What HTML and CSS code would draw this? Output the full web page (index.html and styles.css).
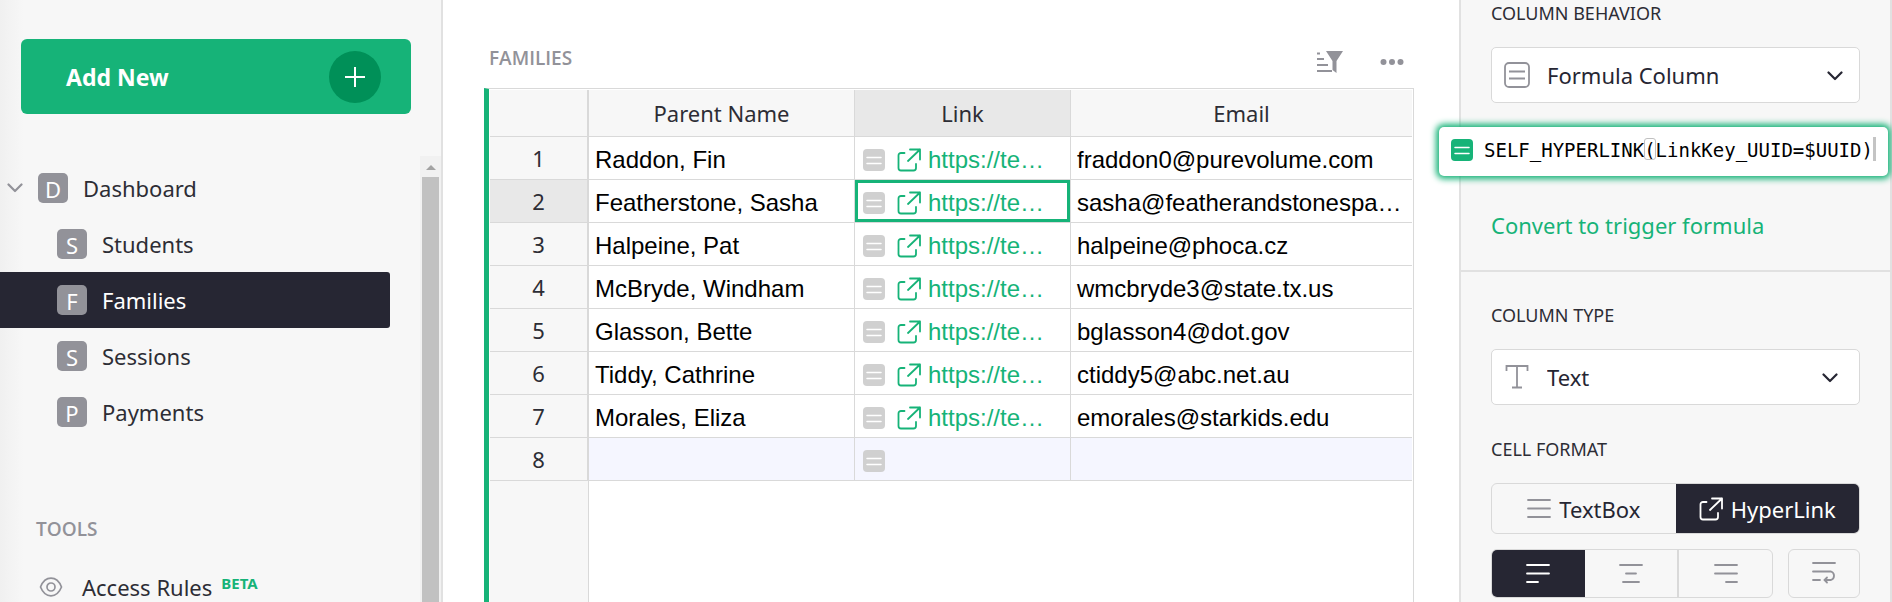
FILE: index.html
```html
<!DOCTYPE html>
<html lang="en">
<head>
<meta charset="utf-8">
<title>Families</title>
<link rel="stylesheet" href="styles.css">
</head>
<body>
<svg class="sprite" aria-hidden="true">
  <symbol id="i-formula" viewBox="0 0 22 22"><rect width="22" height="22" rx="4" fill="currentColor"/><path d="M4 8.500H18M4 14.500H18" stroke="#fff" stroke-width="1.500" stroke-linecap="round"/></symbol>
  <symbol id="i-link" viewBox="0 0 24 24"><path d="M7.500 5H4A2.500 2.500 0 0 0 1.500 7.500V20A2.500 2.500 0 0 0 4 22.500H16.500A2.500 2.500 0 0 0 19 20V16M11 13L23 1.500M13 1.500H23V11.500" fill="none" stroke="currentColor" stroke-width="1.800" stroke-linecap="round" stroke-linejoin="round"/></symbol>
  <symbol id="i-chevron" viewBox="0 0 16 10"><path d="M1.500 1.500L8 8L14.500 1.500" fill="none" stroke="currentColor" stroke-width="2.200" stroke-linecap="round" stroke-linejoin="round"/></symbol>
</svg>
<div class="app">
  <nav class="sidebar">
    <button class="add-new" type="button">Add New
      <span class="add-circle"><svg width="22" height="22" viewBox="0 0 22 22"><path d="M11 1V21M1 11H21" stroke="#fff" stroke-width="2"/></svg></span>
    </button>
    <div class="scroll-area">
      <div class="pages">
        <a class="page root" href="#"><svg class="twisty" width="16" height="10"><use href="#i-chevron"/></svg><span class="initial">D</span>Dashboard</a>
        <a class="page" href="#"><span class="initial">S</span>Students</a>
        <a class="page current" href="#" aria-current="page"><span class="initial">F</span>Families</a>
        <a class="page" href="#"><span class="initial">S</span>Sessions</a>
        <a class="page" href="#"><span class="initial">P</span>Payments</a>
        <h2 class="tools-title">TOOLS</h2>
        <a class="tool" href="#"><svg width="24" height="20" viewBox="0 0 24 20"><path d="M1.500 10C3.500 5 7.500 1.200 12 1.200S20.500 5 22.500 10C20.500 15 16.500 18.800 12 18.800S3.500 15 1.500 10Z" fill="none" stroke="currentColor" stroke-width="1.700"/><circle cx="12" cy="10" r="4" fill="none" stroke="currentColor" stroke-width="1.700"/></svg><span class="tool-name">Access Rules</span><span class="beta">BETA</span></a>
      </div>
      <div class="scrollbar" aria-hidden="true"><span class="arrow"></span><span class="thumb"></span></div>
    </div>
  </nav>

  <main class="content">
    <header class="section-head">
      <h1 class="section-title">FAMILIES</h1>
      <button class="icon-button" type="button" aria-label="Sort and filter"><svg width="28" height="24" viewBox="0 0 28 24"><path d="M1 3.500H4M1 9H8M1 15H12M1 21H16" stroke="currentColor" stroke-width="2"/><path d="M10 1H27L20.500 11V23L16.500 20V11Z" fill="currentColor"/></svg></button>
      <button class="icon-button" type="button" aria-label="More options"><svg width="24" height="24" viewBox="0 0 24 24" fill="currentColor"><circle cx="3.500" cy="12" r="3"/><circle cx="12" cy="12" r="3"/><circle cx="20.500" cy="12" r="3"/></svg></button>
    </header>
    <div class="grid-view">
      <table class="grid">
        <colgroup><col class="c-num"><col class="c-name"><col class="c-link"><col></colgroup>
        <thead><tr><th></th><th>Parent Name</th><th class="active">Link</th><th>Email</th></tr></thead>
        <tbody>
          <tr><th>1</th><td>Raddon, Fin</td><td><div class="link-cell"><svg class="fx"><use href="#i-formula"/></svg><a href="#"><svg><use href="#i-link"/></svg>https://te…</a></div></td><td>fraddon0@purevolume.com</td></tr>
          <tr><th class="active">2</th><td>Featherstone, Sasha</td><td class="selected"><div class="link-cell"><svg class="fx"><use href="#i-formula"/></svg><a href="#"><svg><use href="#i-link"/></svg>https://te…</a></div></td><td>sasha@featherandstonespa…</td></tr>
          <tr><th>3</th><td>Halpeine, Pat</td><td><div class="link-cell"><svg class="fx"><use href="#i-formula"/></svg><a href="#"><svg><use href="#i-link"/></svg>https://te…</a></div></td><td>halpeine@phoca.cz</td></tr>
          <tr><th>4</th><td>McBryde, Windham</td><td><div class="link-cell"><svg class="fx"><use href="#i-formula"/></svg><a href="#"><svg><use href="#i-link"/></svg>https://te…</a></div></td><td>wmcbryde3@state.tx.us</td></tr>
          <tr><th>5</th><td>Glasson, Bette</td><td><div class="link-cell"><svg class="fx"><use href="#i-formula"/></svg><a href="#"><svg><use href="#i-link"/></svg>https://te…</a></div></td><td>bglasson4@dot.gov</td></tr>
          <tr><th>6</th><td>Tiddy, Cathrine</td><td><div class="link-cell"><svg class="fx"><use href="#i-formula"/></svg><a href="#"><svg><use href="#i-link"/></svg>https://te…</a></div></td><td>ctiddy5@abc.net.au</td></tr>
          <tr><th>7</th><td>Morales, Eliza</td><td><div class="link-cell"><svg class="fx"><use href="#i-formula"/></svg><a href="#"><svg><use href="#i-link"/></svg>https://te…</a></div></td><td>emorales@starkids.edu</td></tr>
          <tr class="new-row"><th>8</th><td></td><td><div class="link-cell"><svg class="fx"><use href="#i-formula"/></svg></div></td><td></td></tr>
        </tbody>
      </table>
      <div class="gutter"></div>
    </div>
  </main>

  <aside class="panel">
    <section class="panel-section behavior">
      <label class="panel-label" for="behavior">COLUMN BEHAVIOR</label>
      <div class="picker">
        <svg class="picker-icon" width="26" height="26" viewBox="0 0 26 26" fill="none" stroke="currentColor"><rect x="1" y="1" width="24" height="24" rx="4" stroke-width="1.800"/><path d="M5 9.500H21M5 16.500H21" stroke-width="1.800"/></svg>
        <select id="behavior"><option>Formula Column</option></select>
        <svg class="picker-arrow" width="16" height="10"><use href="#i-chevron"/></svg>
      </div>
      <div class="formula-slot">
        <div class="formula">
          <svg class="formula-icon" width="22" height="22"><use href="#i-formula"/></svg>
          <div class="code">
            <input type="text" aria-label="Formula" value="SELF_HYPERLINK(LinkKey_UUID=$UUID)">
            <span class="bracket"></span><span class="caret"></span>
          </div>
        </div>
      </div>
      <a class="convert" href="#">Convert to trigger formula</a>
    </section>
    <section class="panel-section">
      <label class="panel-label" for="type">COLUMN TYPE</label>
      <div class="picker type">
        <svg class="picker-icon" width="26" height="26" viewBox="0 0 26 26" fill="none" stroke="currentColor"><path d="M2.500 7V2H23.500V7M13 2V23.500M8 23.500H18" stroke-width="1.800"/></svg>
        <select id="type"><option>Text</option></select>
        <svg class="picker-arrow" width="16" height="10"><use href="#i-chevron"/></svg>
      </div>
      <h2 class="panel-label format-label">CELL FORMAT</h2>
      <div class="segmented formats">
        <button type="button"><svg width="24" height="22" viewBox="0 0 24 22"><path d="M1 2H23M1 10.500H23M1 19H23"/></svg>TextBox</button>
        <button type="button" class="on" aria-pressed="true"><svg class="link-icon" width="24" height="24"><use href="#i-link"/></svg>HyperLink</button>
      </div>
      <div class="align-row">
        <div class="segmented aligns">
          <button type="button" class="on" aria-label="Align left" aria-pressed="true"><svg width="24" height="22" viewBox="0 0 24 22"><path d="M1 2H23M1 10.500H23M1 19H12"/></svg></button>
          <button type="button" aria-label="Align center"><svg width="24" height="22" viewBox="0 0 24 22"><path d="M1 2H23M7 10.500H17M4 19H20"/></svg></button>
          <button type="button" aria-label="Align right"><svg width="24" height="22" viewBox="0 0 24 22"><path d="M1 2H23M1 10.500H23M12 19H23"/></svg></button>
        </div>
        <div class="segmented wrap">
          <button type="button" aria-label="Wrap text"><svg width="24" height="28" viewBox="0 0 24 28"><path d="M1 3H23M1 11.500H19A4.500 4.500 0 0 1 19 20H13M15 17.500L12.500 20L15 22.500M1 20H8"/></svg></button>
        </div>
      </div>
    </section>
  </aside>
</div>
</body>
</html>
```
FILE: styles.css
```css
* { box-sizing: border-box; }

body {
  margin: 0;
  overflow: hidden;
  background: #fff;
  color: #2d2d35;
  font-family: "Noto Sans", "Open Sans", sans-serif;
  font-size: 22px;
}

a { color: inherit; text-decoration: none; }
button { font: inherit; color: inherit; border: 0; background: none; padding: 0; }
h1, h2 { margin: 0; font-weight: 400; }
svg { flex: none; }
.sprite { position: absolute; width: 0; height: 0; }

.app {
  display: grid;
  grid-template-columns: 443px minmax(0, 1fr) 433px;
  height: 100vh;
}

/* Left panel */
.sidebar {
  display: flex;
  flex-direction: column;
  min-height: 0;
  padding-top: 39px;
  border-right: 2px solid #e1e1e1;
  background: linear-gradient(90deg, #f0f0f0, #f7f7f7 24px);
}
.add-new {
  display: flex;
  align-items: center;
  justify-content: space-between;
  margin: 0 30px 42px 21px;
  padding: 0 30px 0 45px;
  height: 75px;
  flex: none;
  border-radius: 6px;
  background: #16b378;
  color: #fff;
  font-size: 23px;
  font-weight: 700;
}
.add-circle {
  display: grid;
  place-items: center;
  width: 52px;
  height: 52px;
  border-radius: 50%;
  background: #009058;
}
.scroll-area { display: flex; flex: 1; min-height: 0; overflow: hidden; }
.pages { flex: 1; padding: 4px 30px 0 0; }
.page {
  display: flex;
  align-items: center;
  gap: 15px;
  height: 56px;
  padding-left: 57px;
  border-radius: 0 3px 3px 0;
}
.page.root { padding-left: 7px; }
.page.current { background: #262633; color: #fff; }
.twisty { color: #929299; }
.initial {
  width: 30px;
  height: 30px;
  border-radius: 5px;
  background: #929299;
  color: #fff;
  line-height: 32px;
  text-align: center;
}
.tools-title {
  margin: 77px 0 0 36px;
  color: #929299;
  font-family: "Open Sans", sans-serif;
  font-size: 19px;
  font-weight: 600;
  line-height: 24px;
}
.tool { display: flex; align-items: center; margin: 24px 0 0 39px; height: 44px; }
.tool svg { color: #929299; }
.tool-name { margin: 0 9px 0 19px; line-height: 30px; }
.beta { align-self: flex-start; margin-top: 8px; color: #16b378; font-size: 15px; font-weight: 700; line-height: 20px; }
.scrollbar { display: flex; flex-direction: column; width: 21px; background: #f1f1f1; }
.arrow { align-self: center; margin: 9px 0 7px; border: 5px solid transparent; border-top: 0; border-bottom-color: #a3a3a3; }
.thumb { flex: 1; margin: 0 2px; background: #c1c1c1; }

/* Data grid */
.content { display: flex; flex-direction: column; min-width: 0; padding: 46px 45px 0 41px; }
.section-head { display: flex; align-items: flex-start; gap: 36px; height: 42px; padding: 0 10px 0 5px; }
.section-title { flex: 1; color: #929299; font-family: "Open Sans", sans-serif; font-size: 19px; font-weight: 600; line-height: 24px; }
.icon-button { display: flex; height: 32px; align-items: center; color: #929299; }
.grid-view {
  display: flex;
  flex-direction: column;
  flex: 1;
  border: solid #d9d9d9;
  border-width: 1px 1px 0 0;
  border-left: 5px solid #16b378;
  padding: 1px 1px 0 1px;
}
.grid { width: 100%; table-layout: fixed; border-spacing: 0; }
.c-num { width: 99px; }
.c-name { width: 266px; }
.c-link { width: 216px; }
.grid th, .grid td {
  height: 43px;
  padding: 0;
  border: solid #d9d9d9;
  border-width: 0 1px 1px 0;
  overflow: hidden;
  white-space: nowrap;
}
.grid th { background: #f7f7f7; font-weight: 400; line-height: 30px; text-align: center; }
.grid thead th { height: 47px; }
.grid tr > :first-child { border-right-width: 2px; }
.grid tr > :last-child { border-right-width: 0; }
.grid th.active { background: #e8e8e8; }
.grid td { padding: 3px 0 0 6px; color: #000; font-family: "Liberation Sans", Arial, sans-serif; font-size: 24px; line-height: 28px; }
.grid .new-row td { background: #f5f6ff; }
.grid td.selected { box-shadow: inset 0 0 0 3px #16b378; }
.link-cell { display: flex; align-items: center; gap: 12px; padding-left: 2px; }
.fx { width: 22px; height: 22px; color: #d0d0d0; }
.link-cell a { display: flex; align-items: center; gap: 7px; color: #16b378; }
.link-cell a svg { width: 24px; height: 24px; }
.gutter { flex: 1; width: 99px; border-right: 1px solid #d9d9d9; background: #f7f7f7; }

/* Right panel */
.panel { border: solid #e1e1e1; border-width: 0 2px; background: #f7f7f7; }
.panel-section { padding: 30px 30px 0; }
.panel-section.behavior { padding-top: 0; height: 272px; border-bottom: 2px solid #e1e1e1; }
.panel-label { display: block; font-size: 18px; line-height: 26px; }
.picker { position: relative; margin-top: 21px; color: #262633; }
.picker select {
  appearance: none;
  display: block;
  width: 100%;
  height: 56px;
  padding: 0 40px 0 55px;
  border: 1px solid #d9d9d9;
  border-radius: 5px;
  background: #fff;
  color: inherit;
  font: inherit;
}
.picker-icon { position: absolute; left: 13px; top: 15px; color: #929299; pointer-events: none; }
.picker-arrow { position: absolute; right: 17px; top: 24px; pointer-events: none; }
.type .picker-arrow { right: 22px; }
.formula-slot { position: relative; margin-top: 24px; height: 49px; }
.formula {
  position: absolute;
  inset: 0 -28px 0 -52px;
  display: flex;
  align-items: flex-start;
  gap: 11px;
  padding: 10px 0 0 12px;
  border-radius: 5px;
  background: #fff;
  box-shadow: 0 0 6px 3px #16b378;
}
.formula-icon { margin-top: 2px; color: #16b378; }
.code { position: relative; display: flex; flex: 1; font: 19px/26px "DejaVu Sans Mono", "Liberation Mono", monospace; }
.code input { width: 34ch; height: 26px; padding: 0; border: 0; outline: 0; background: none; color: #000; font: inherit; }
.bracket { position: absolute; left: 14ch; top: 1px; width: 1ch; height: 22px; border: 1px solid #c0c0c0; border-radius: 3px; }
.caret { width: 3px; height: 24px; background: #c4c4c4; }
.convert { display: block; margin-top: 34px; color: #16b378; line-height: 30px; }
.format-label { margin-top: 31px; }
.segmented { display: flex; border: 1px solid #d9d9d9; border-radius: 6px; overflow: hidden; }
.segmented button { display: flex; flex: 1; align-items: center; justify-content: center; gap: 8px; color: #262633; }
.segmented svg { fill: none; stroke: #929299; stroke-width: 1.8; stroke-linecap: round; }
.segmented .on { background: #262633; color: #fff; }
.segmented .on svg { stroke: #fff; }
.formats { height: 51px; margin-top: 21px; }
.align-row { display: flex; gap: 15px; margin-top: 15px; }
.aligns { flex: 4; height: 49px; }
.aligns button + button + button { border-left: 2px solid #d9d9d9; }
.wrap { flex: 1; height: 49px; }
```
